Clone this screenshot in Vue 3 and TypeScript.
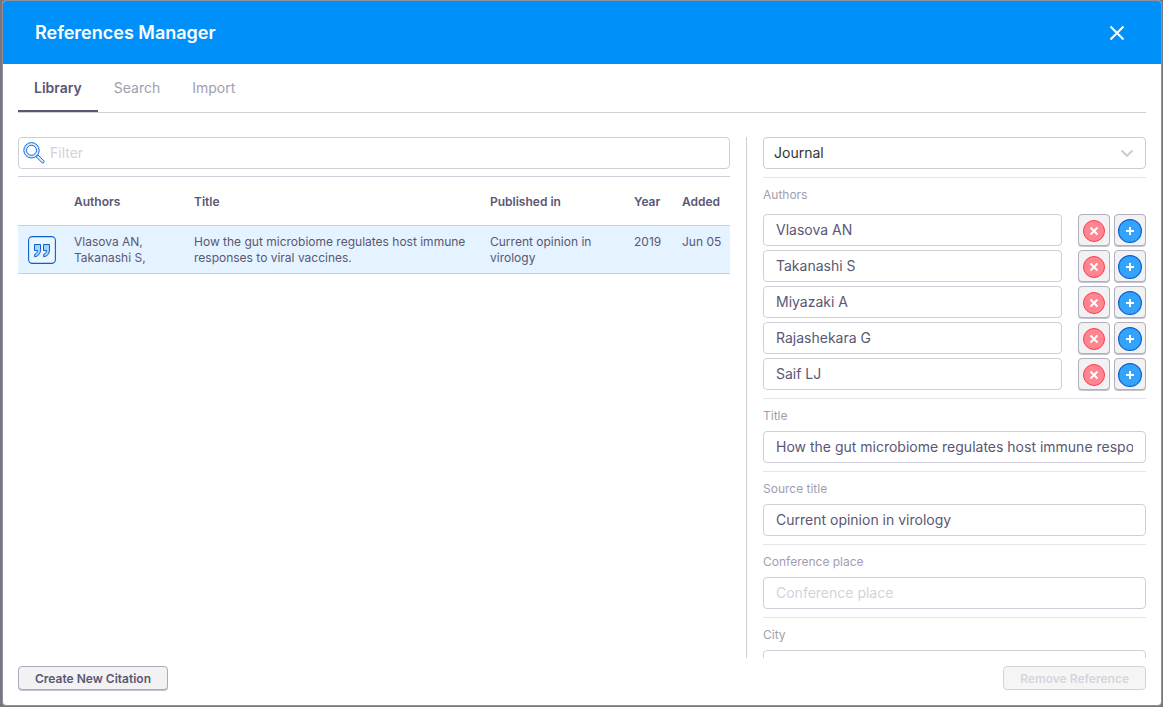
<script setup lang="ts">
import { ref } from 'vue'

interface Reference {
  authors: string
  title: string
  source: string
  year: string
  added: string
}

const tabs = ['Library', 'Search', 'Import']
const activeTab = ref('Library')
const filter = ref('')
const kind = ref('Journal')

const references: Reference[] = [
  {
    authors: 'Vlasova AN, Takanashi S,',
    title: 'How the gut microbiome regulates host immune responses to viral vaccines.',
    source: 'Current opinion in virology',
    year: '2019',
    added: 'Jun 05',
  },
]

const authors = ref(['Vlasova AN', 'Takanashi S', 'Miyazaki A', 'Rajashekara G', 'Saif LJ'])

const fields = ref([
  { id: 'title', label: 'Title', value: 'How the gut microbiome regulates host immune responses to viral vaccines.', placeholder: 'Title' },
  { id: 'source-title', label: 'Source title', value: 'Current opinion in virology', placeholder: 'Source title' },
  { id: 'conference-place', label: 'Conference place', value: '', placeholder: 'Conference place' },
  { id: 'city', label: 'City', value: '', placeholder: 'City' },
])

function removeAuthor(index: number) {
  authors.value.splice(index, 1)
}

function addAuthor(index: number) {
  authors.value.splice(index + 1, 0, '')
}
</script>

<template>
  <div class="backdrop">
    <section class="modal" role="dialog" aria-labelledby="modal-title">
      <header class="modal-header">
        <h1 id="modal-title">References Manager</h1>
        <button class="close" type="button" aria-label="Close">
          <svg width="16" height="16" viewBox="0 0 16 16" fill="none" stroke="#fff" stroke-width="2">
            <path d="M1.5 1.5l13 13M14.5 1.5l-13 13" />
          </svg>
        </button>
      </header>

      <nav class="tabs" role="tablist">
        <button
          v-for="tab in tabs"
          :key="tab"
          type="button"
          role="tab"
          class="tab"
          :class="{ active: tab === activeTab }"
          :aria-selected="tab === activeTab"
          @click="activeTab = tab"
        >{{ tab }}</button>
      </nav>

      <div class="content">
        <div class="library">
          <div class="filter">
            <svg width="24" height="24" viewBox="0 0 24 24" stroke="#1a6ad4" stroke-width="1">
              <path d="M14.2 15.9l1.9-1.9 5.8 5.8a1.35 1.35 0 0 1-1.9 1.9z" fill="#d5ebff" />
              <circle cx="9.5" cy="9.3" r="7.7" fill="#d5ebff" />
              <circle cx="9.5" cy="9.3" r="5" fill="#fff" />
            </svg>
            <input v-model="filter" type="text" placeholder="Filter" aria-label="Filter" />
          </div>

          <table class="references">
            <colgroup>
              <col class="col-icon" />
              <col class="col-authors" />
              <col />
              <col class="col-source" />
              <col class="col-year" />
              <col class="col-added" />
            </colgroup>
            <thead>
              <tr>
                <td></td>
                <th scope="col">Authors</th>
                <th scope="col">Title</th>
                <th scope="col">Published in</th>
                <th scope="col">Year</th>
                <th scope="col">Added</th>
              </tr>
            </thead>
            <tbody>
              <tr v-for="item in references" :key="item.title">
                <td class="icon-cell">
                  <svg width="28" height="28" viewBox="0 0 28 28" stroke="#0c5fd0">
                    <rect x="0.6" y="0.6" width="26.8" height="26.8" rx="3.8" fill="#eaf5ff" stroke-width="1.1" />
                    <path d="M6.5 8.5h6v5.4c0 3.7-1.9 6.2-5.8 6.9v-2.5c1.9-.6 2.7-1.9 2.8-3.8h-3z" fill="#a3d4ff" />
                    <path d="M15.5 8.5h6v5.4c0 3.7-1.9 6.2-5.8 6.9v-2.5c1.9-.6 2.7-1.9 2.8-3.8h-3z" fill="#a3d4ff" />
                  </svg>
                </td>
                <td>{{ item.authors }}</td>
                <td>{{ item.title }}</td>
                <td>{{ item.source }}</td>
                <td>{{ item.year }}</td>
                <td>{{ item.added }}</td>
              </tr>
            </tbody>
          </table>
        </div>

        <form class="details" @submit.prevent>
          <div class="select">
            <select v-model="kind" aria-label="Reference type">
              <option>Journal</option>
              <option>Book</option>
              <option>Conference</option>
            </select>
            <svg width="14" height="14" viewBox="0 0 14 14" fill="none" stroke="#ccc" stroke-width="2">
              <path d="M1.5 4.5L7 9.8l5.5-5.3" />
            </svg>
          </div>

          <fieldset class="group">
            <legend class="label">Authors</legend>
            <div v-for="(author, index) in authors" :key="index" class="author">
              <input v-model="authors[index]" class="text" type="text" :aria-label="'Author ' + (index + 1)" />
              <div class="actions">
                <button class="square" type="button" :aria-label="'Remove ' + author" @click="removeAuthor(index)">
                  <svg width="24" height="24" viewBox="0 0 24 24">
                    <circle cx="12" cy="12" r="10.5" fill="#ff8590" stroke="#ff3b52" />
                    <path d="M8.5 8.5l7 7M15.5 8.5l-7 7" stroke="#fff" stroke-width="2" />
                  </svg>
                </button>
                <button class="square" type="button" aria-label="Add author" @click="addAuthor(index)">
                  <svg width="24" height="24" viewBox="0 0 24 24">
                    <circle cx="12" cy="12" r="11.4" fill="#34a3fb" stroke="#0c5fd0" stroke-width="1.2" />
                    <path d="M12 8v8M8 12h8" stroke="#fff" stroke-width="2" />
                  </svg>
                </button>
              </div>
            </div>
          </fieldset>

          <div v-for="field in fields" :key="field.id" class="group">
            <label class="label" :for="field.id">{{ field.label }}</label>
            <input :id="field.id" v-model="field.value" class="text" type="text" :placeholder="field.placeholder" />
          </div>
        </form>
      </div>

      <footer class="modal-footer">
        <button class="button" type="button">Create New Citation</button>
        <button class="button" type="button" disabled>Remove Reference</button>
      </footer>
    </section>
  </div>
</template>

<style>
body {
  background: #77767c;
}
</style>

<style scoped>
* {
  box-sizing: border-box;
}

.backdrop {
  height: 100vh;
  padding: 0 1px 1px 2px;
  background: #77767c;
  font-family: Inter, "Liberation Sans", sans-serif;
  color: #5a5773;
}

.modal {
  display: flex;
  flex-direction: column;
  height: 100%;
  overflow: hidden;
  background: #fff;
  border: 1px solid #908fa3;
  border-radius: 4px;
}

button,
input,
select {
  font-family: inherit;
}

.modal-header {
  display: flex;
  flex: none;
  align-items: center;
  justify-content: space-between;
  height: 63px;
  padding: 0 32px;
  background: #0090fa;
}

h1 {
  margin: 0;
  font-size: 18px;
  font-weight: 600;
  line-height: 24px;
  color: #fff;
}

.close {
  display: flex;
  align-items: center;
  justify-content: center;
  width: 24px;
  height: 24px;
  padding: 0;
  background: none;
  border: 0;
}

.tabs {
  display: flex;
  flex: none;
  height: 49px;
  margin: 0 15px;
  border-bottom: 1px solid #cfcfd6;
}

.tab {
  height: 48px;
  padding: 2px 16px 0;
  font-size: 14px;
  line-height: 20px;
  color: #a09eb0;
  background: none;
  border: 0;
  border-bottom: 2px solid transparent;
}

.tab.active {
  font-weight: 600;
  color: #5a5773;
  border-bottom-color: #5a5773;
}

.content {
  display: flex;
  flex: 1;
  gap: 16px;
  min-height: 0;
  margin: 24px 15px 8px;
}

.library {
  flex: 1;
  min-width: 0;
}

.filter {
  display: flex;
  align-items: center;
  gap: 4px;
  height: 32px;
  padding: 0 3px;
  border: 1px solid #cfced9;
  border-radius: 4px;
}

.filter svg {
  flex: none;
}

.filter input {
  flex: 1;
  min-width: 0;
  padding: 0;
  font-size: 14px;
  line-height: 20px;
  color: #5a5773;
  background: none;
  border: 0;
  outline: 0;
}

input::placeholder {
  color: #d3d2dc;
  opacity: 1;
}

.references {
  width: 100%;
  margin-top: 7px;
  table-layout: fixed;
  border-spacing: 0;
  border-top: 1px solid #cfced9;
  font-size: 12px;
  line-height: 16px;
}

.col-icon { width: 48px; }
.col-authors { width: 120px; }
.col-source { width: 144px; }
.col-year { width: 48px; }
.col-added { width: 56px; }

.references th,
.references td {
  padding: 8px 0 7px 8px;
  text-align: left;
  vertical-align: top;
  border-bottom: 1px solid #c6cfdb;
}

.references th {
  height: 49px;
  font-weight: 600;
  vertical-align: middle;
}

.references tbody td {
  background: #e4f3ff;
}

.references .icon-cell {
  padding: 0 0 0 10px;
  vertical-align: middle;
}

.icon-cell svg {
  display: block;
}

.details {
  flex: 0 0 400px;
  padding-left: 16px;
  overflow-y: auto;
  scrollbar-width: none;
  border-left: 1px solid #cfced9;
}

.select {
  display: grid;
  align-items: center;
  margin-bottom: 8px;
}

.select select,
.select svg {
  grid-area: 1 / 1;
}

.select select {
  width: 100%;
  height: 32px;
  padding: 0 10px 2px;
  font-size: 14px;
  color: #333;
  appearance: none;
  background: #fff;
  border: 1px solid #ccc;
  border-radius: 4px;
}

.select svg {
  justify-self: end;
  margin-right: 12px;
  pointer-events: none;
}

.group {
  min-width: 0;
  margin: 0 0 8px;
  padding: 9px 0 0;
  border: 0;
  border-top: 1px solid #e6e6ea;
}

.label {
  display: block;
  float: left;
  width: 100%;
  margin-bottom: 7px;
  padding: 0;
  font-size: 12px;
  line-height: 16px;
  color: #a09eb0;
}

.text {
  display: block;
  width: 100%;
  min-width: 0;
  height: 32px;
  padding: 0 12px 2px;
  font-size: 14px;
  line-height: 20px;
  color: #5a5773;
  background: #fff;
  border: 1px solid #cfced9;
  border-radius: 4px;
}

.author {
  display: flex;
  clear: both;
  gap: 16px;
  padding-top: 4px;
}

.actions {
  display: flex;
  gap: 4px;
}

.square {
  display: flex;
  flex: none;
  align-items: center;
  justify-content: center;
  width: 32px;
  height: 32px;
  padding: 2px 0 0;
  background: #f2f2f2;
  border: 1px solid #b0afbf;
  border-radius: 4px;
  box-shadow: 0 1px 0 #c4c3d0;
}

.modal-footer {
  display: flex;
  flex: none;
  justify-content: space-between;
  padding: 0 15px 15px;
}

.button {
  height: 24px;
  padding: 2px 16px 0;
  font-size: 12px;
  font-weight: 600;
  line-height: 16px;
  color: #5a5773;
  background: #f2f2f2;
  border: 1px solid #acabbd;
  border-radius: 4px;
  box-shadow: 0 1px 0 #c4c3d0;
}

.button:disabled {
  color: #d5d5de;
  background: #f5f5f5;
  border-color: #d3d2dc;
  box-shadow: none;
}
</style>
